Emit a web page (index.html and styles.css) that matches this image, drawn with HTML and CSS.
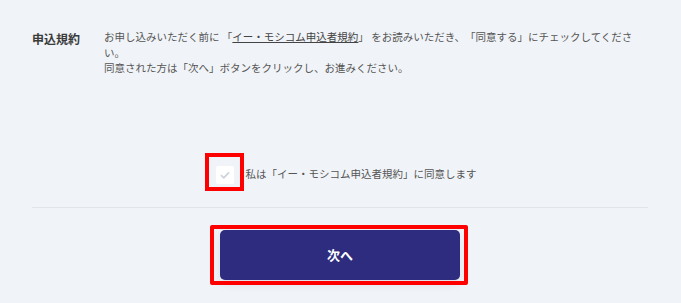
FILE: index.html
```html
<!DOCTYPE html>
<html>
<head>
    <title>申込規約</title>
    <link rel="stylesheet" href="styles.css">
</head>
<body>
    <div class="container">
        <div class="terms">
            <div class="terms-label">申込規約</div>
            <div class="terms-text">
                <p>お申し込みいただく前に 「<a href="#">イー・モシコム申込者規約</a>」 をお読みいただき、「同意する」にチェックしてください。</p>
                <p>同意された方は「次へ」ボタンをクリックし、お進みください。</p>
            </div>
        </div>
        <div class="agree">
            <label class="agree-label">
                <span class="checkbox">
                    <svg width="12" height="12" viewBox="0 0 12 12">
                        <path d="M2 6.2 L4.8 8.8 L10 3.4" fill="none" stroke="#cdd3dc" stroke-width="1.8"/>
                    </svg>
                    <span class="mark mark-check"></span>
                </span>
                <span class="agree-text">私は「イー・モシコム申込者規約」に同意します</span>
            </label>
        </div>
        <div class="actions">
            <div class="button-wrap">
                <button class="next-button">次へ</button>
                <div class="mark mark-button"></div>
            </div>
        </div>
    </div>
</body>
</html>
```

FILE: styles.css
```css
html, body {
    min-height: 100vh;
}
body {
    font-family: "Noto Sans CJK JP", "Noto Sans", sans-serif;
    background-color: #f0f3f7;
    color: #555;
    margin: 0;
    padding: 0;
    text-spacing-trim: space-all;
}
.container {
    padding: 28px 33px 30px 32px;
}
.terms {
    display: flex;
    align-items: flex-start;
}
.terms-label {
    width: 72px;
    flex-shrink: 0;
    font-size: 12px;
    font-weight: bold;
    color: #3a3a3a;
    line-height: 20px;
    padding-top: 1px;
}
.terms-text {
    flex: 1;
    font-size: 10.5px;
    line-height: 15.5px;
    padding-top: 1px;
}
.terms-text p {
    margin: 0;
}
.terms-text a {
    color: #444;
    text-decoration: underline;
}
.agree {
    display: flex;
    justify-content: center;
    padding: 90px 0 22px 12px;
    border-bottom: 1px solid #e1e5eb;
}
.agree-label {
    display: flex;
    align-items: center;
    gap: 12px;
    font-size: 10.5px;
    color: #555;
}
.agree-text {
    margin-bottom: 4px;
}
.checkbox {
    position: relative;
    width: 18px;
    height: 18px;
    background-color: #fff;
    border-radius: 2px;
    display: flex;
    align-items: center;
    justify-content: center;
}
.mark {
    position: absolute;
    box-sizing: border-box;
    border: 4px solid #ff0000;
}
.mark-check {
    left: -11px;
    top: -13px;
    width: 39px;
    height: 38px;
}
.actions {
    display: flex;
    justify-content: center;
    padding-top: 22px;
}
.button-wrap {
    position: relative;
    width: 240px;
    height: 50px;
}
.next-button {
    display: block;
    width: 240px;
    height: 50px;
    background-color: #2e2c7e;
    color: #fff;
    border: none;
    border-radius: 5px;
    font-family: inherit;
    font-size: 13px;
    font-weight: bold;
    box-shadow: 0 4px 10px rgba(0, 0, 0, 0.08);
    cursor: pointer;
}
.mark-button {
    left: -10px;
    top: -5px;
    width: 258px;
    height: 60px;
    border-radius: 2px;
}
```
